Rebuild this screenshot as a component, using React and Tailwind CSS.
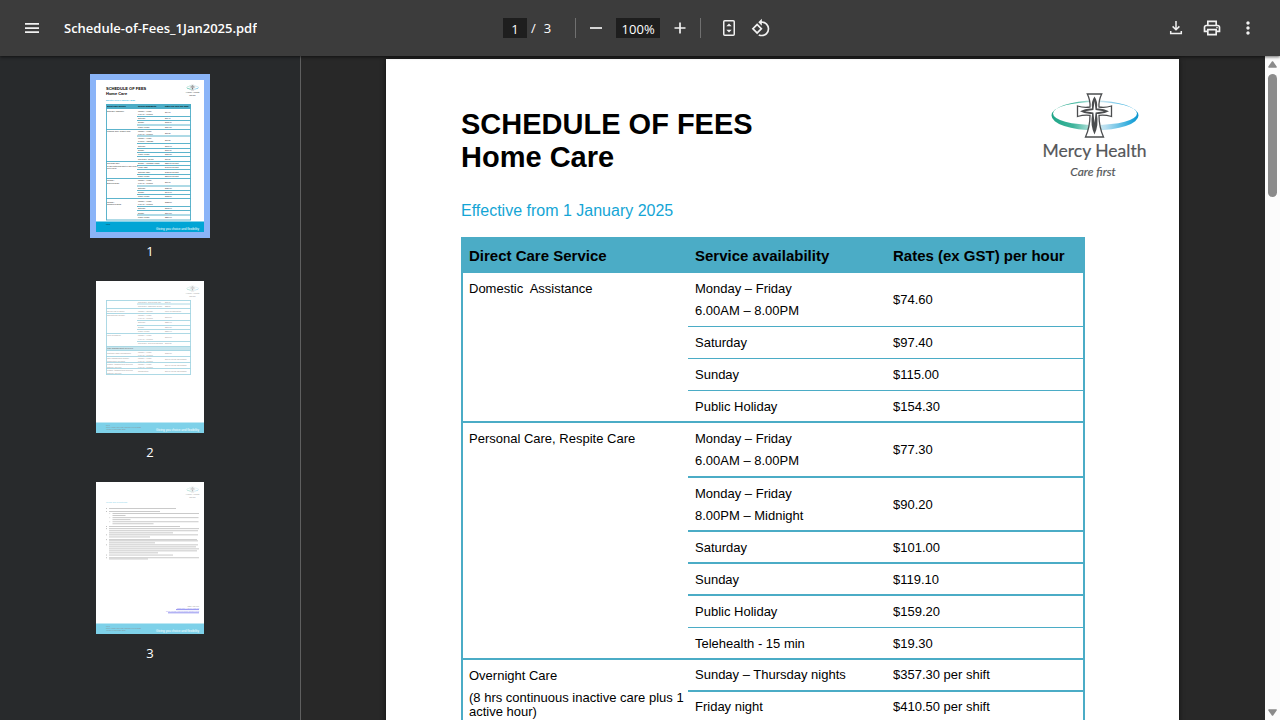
import React from "react";
import {
  MdMoreVert,
  MdOutlinePrint,
  MdOutlineRotate90DegreesCcw,
} from "react-icons/md";

const groups = [
  {
    name: "Domestic\u00a0 Assistance",
    rows: [
      { when: ["Monday – Friday", "6.00AM – 8.00PM"], rate: "$74.60", cls: "h-[54px] border-b" },
      { when: ["Saturday"], rate: "$97.40", cls: "h-8 border-b" },
      { when: ["Sunday"], rate: "$115.00", cls: "h-8 border-b" },
      { when: ["Public Holiday"], rate: "$154.30", cls: "h-8 border-b-2 pt-0.5" },
    ],
  },
  {
    name: "Personal Care, Respite Care",
    rows: [
      { when: ["Monday – Friday", "6.00AM – 8.00PM"], rate: "$77.30", cls: "h-[55px] border-b-2" },
      { when: ["Monday – Friday", "8.00PM – Midnight"], rate: "$90.20", cls: "h-[54px] border-b-2 pt-0.5" },
      { when: ["Saturday"], rate: "$101.00", cls: "h-8 border-b-2 pt-0.5" },
      { when: ["Sunday"], rate: "$119.10", cls: "h-8 border-b-2 pt-0.5" },
      { when: ["Public Holiday"], rate: "$159.20", cls: "h-8 border-b" },
      { when: ["Telehealth - 15 min"], rate: "$19.30", cls: "h-8 border-b-2 pt-0.5" },
    ],
  },
  {
    name: "Overnight Care",
    note: "(8 hrs continuous inactive care plus 1 active hour)",
    rows: [
      { when: ["Sunday – Thursday nights"], rate: "$357.30 per shift", cls: "h-8 border-b-2" },
      { when: ["Friday night"], rate: "$410.50 per shift", cls: "h-8 border-b-2" },
    ],
  },
];

function Logo({ id, ...rest }) {
  return (
    <svg viewBox="0 0 104 86" role="img" aria-label="Mercy Health" {...rest}>
      <defs>
        <linearGradient id={id} x1="0" x2="1">
          <stop offset="0" stopColor="#1fa587" />
          <stop offset="0.25" stopColor="#3fb59c" />
          <stop offset="0.5" stopColor="#d5eeee" />
          <stop offset="0.62" stopColor="#b9dff0" />
          <stop offset="0.88" stopColor="#35aede" />
          <stop offset="1" stopColor="#0a95cf" />
        </linearGradient>
      </defs>
      <path
        fill={`url(#${id})`}
        fillRule="evenodd"
        d="M8.500 22.500a43.500 15 0 1 0 87 0a43.500 15 0 1 0 -87 0ZM10 20.500a42 11.500 0 1 1 84 0a42 11.500 0 1 1 -84 0Z"
      />
      <path
        fill="#fff"
        stroke="#4b4d4f"
        strokeWidth="1.300"
        d="M44.300 1H58.700Q55.600 7 56 14Q62 15 68.500 13V23.500Q62 21.500 56 22.300Q56 34 60.500 44H42.500Q47 34 47 22.300Q41 21.500 34.500 23.500V13Q41 15 47 14Q47.400 7 44.300 1Z"
      />
      <path
        fill="#4b4d4f"
        d="M51.500 3.500Q55.300 9 53.900 15.600Q60 15 66 18.300Q60 21.600 53.900 21Q56 32 51.500 41.500Q47 32 49.100 21Q43 21.600 37 18.300Q43 15 49.100 15.600Q47.700 9 51.500 3.500Z"
      />
      <path
        fill="#fff"
        d="M51.500 8L52.600 17L61 18.300L52.600 19.600L51.500 30L50.400 19.600L42 18.300L50.400 17Z"
      />
      <g fill="#55575a" fontFamily="Lato, sans-serif" textAnchor="middle">
        <text x="51.500" y="64" fontSize="17.500" stroke="#55575a" strokeWidth="0.200">Mercy Health</text>
        <text x="50" y="83" fontSize="12" fontStyle="italic" stroke="#55575a" strokeWidth="0.200">Care first</text>
      </g>
    </svg>
  );
}

/* Thumbnail drawings share a 108 x 152 canvas; table texts are [x, y, text]. */
const C1 = 11;
const C2 = 42;
const C3 = 69;
const MF = "Monday – Friday";
const HRS = "6.00AM – 8.00PM";

const thumbOne = {
  part: [36.5, 40.5, 45, 56, 63.5, 68.5, 72.5, 76.5, 85.5, 89.5, 94.5, 106, 110.5, 114.5, 126.5, 130.5, 135],
  full: [49.5, 81.5, 98.5, 118.5, 140],
  text: [
    [C1, 31.7, "Domestic Assistance"], [C2, 31.7, MF], [C2, 34.8, HRS], [C3, 33, "$74.60"],
    [C2, 39, "Saturday"], [C3, 39, "$97.40"], [C2, 43.3, "Sunday"], [C3, 43.3, "$115.00"],
    [C2, 48, "Public Holiday"], [C3, 48, "$154.30"],
    [C1, 52, "Personal Care, Respite Care"], [C2, 51.9, MF], [C2, 54.8, HRS], [C3, 54, "$77.30"],
    [C2, 59, MF], [C2, 62, "8.00PM – Midnight"], [C3, 61, "$90.20"],
    [C2, 67, "Saturday"], [C3, 67, "$101.00"], [C2, 71.2, "Sunday"], [C3, 71.2, "$119.10"],
    [C2, 75.2, "Public Holiday"], [C3, 75.2, "$159.20"], [C2, 80, "Telehealth - 15 min"], [C3, 80, "$19.30"],
    [C1, 84.2, "Overnight Care"], [C2, 84.2, "Sunday – Thursday nights"], [C3, 84.2, "$357.30 per shift"],
    [C1, 87, "(8 hrs continuous inactive care plus 1"], [C1, 89, "active hour)"],
    [C2, 88, "Friday night"], [C3, 88, "$410.50 per shift"],
    [C2, 93, "Saturday night"], [C3, 93, "$431.20 per shift"], [C2, 97.3, "Public Holiday"], [C3, 97.3, "$560.50 per shift"],
    [C1, 101.3, "Nursing –"], [C1, 104, "Enrolled Nurse"], [C2, 101.3, MF], [C2, 104.3, HRS], [C3, 103, "$99.10"],
    [C2, 109, "Saturday"], [C3, 109, "$126.30"], [C2, 113.2, "Sunday"], [C3, 113.2, "$141.10"],
    [C2, 117.2, "Public Holiday"], [C3, 117.2, "$188.20"],
    [C1, 122.5, "Nursing –"], [C1, 125, "Registered Nurse"], [C2, 122.3, MF], [C2, 125.3, HRS], [C3, 123, "$128.50"],
    [C2, 129.3, "Saturday"], [C3, 129.3, "$168.60"], [C2, 133.5, "Sunday"], [C3, 133.5, "$194.50"],
    [C2, 138.2, "Public Holiday"], [C3, 138.2, "$256.90"],
  ],
};

const thumbTwo = {
  part: [23, 39.5, 44.5, 48.5, 60.5],
  full: [19.5, 27.5, 32.5, 52.5, 65.5, 69.5, 75.5, 81.5, 87.5, 93.5],
  text: [
    [C2, 22, "Telehealth - services 30 min"], [C3, 22, "$65.00"], [C2, 26, "Telehealth - additional 15 min"], [C3, 26, "$32.50"],
    [C1, 31, "On-call visit or advice"], [C2, 31, "Monday – Sunday"], [C3, 31, "Price on application"],
    [C1, 35, "Occupational Therapy"], [C2, 35, MF], [C2, 38, HRS], [C3, 37, "$199.80"],
    [C2, 42.3, "Saturday"], [C3, 42.3, "$236.00"], [C2, 47, "Sunday"], [C3, 47, "$277.20"],
    [C2, 51, "Public Holiday"], [C3, 51, "$359.60"],
    [C1, 55, "Meal preparation"], [C2, 55, MF], [C2, 59, HRS], [C3, 57, "$199.80"],
    [C2, 63.3, "Telehealth - services individual"], [C3, 63.3, "$117.20"],
    [C1, 73.2, "Customer Case Management"], [C2, 72, MF], [C2, 75, HRS], [C3, 73, "$139.20"],
    [C1, 78, "Care Management support"], [C1, 80.5, "(supplement included)"], [C2, 78, MF], [C2, 80.5, HRS], [C3, 79, "$69.60 per 30 min session"],
    [C1, 84, "Garden, transportation services"], [C1, 86.5, "distance travelled"], [C2, 84, MF], [C2, 86.5, HRS], [C3, 85, "$69.60 per 30 min session"],
    [C1, 90, "Garden, transportation services"], [C1, 92.5, "distance travelled"], [C2, 91, "Consultation"], [C3, 91, "$69.60 per 30 min session"],
  ],
};

/* Paragraph lines of the terms page: [x, y, width]. */
const termLines = [
  [13, 26, 67], [13, 29, 51], [16.5, 31, 86.5], [16.5, 33, 13], [16.5, 35.2, 86], [16.5, 37.2, 18],
  [16.5, 39.3, 86], [16.5, 41.3, 41], [13, 44, 71], [13, 46.2, 90], [13, 48.3, 89], [13, 50.4, 64],
  [13, 52.4, 89], [13, 54.5, 41], [13, 57.2, 88], [13, 58.4, 89], [13, 60.4, 46], [13, 62.4, 89],
  [13, 64.4, 87], [13, 66.4, 90], [13, 68.4, 88], [13, 70.4, 49], [13, 72.6, 64], [13, 75.3, 90], [13, 76.5, 39],
];
const termMarks = [26, 29, 44, 46.2, 52.4, 57.2, 62.4, 72.6, 75.3];

function ThumbTable({ data, top }) {
  const bottom = data.full[data.full.length - 1];
  return (
    <g>
      <g fill="#222" fontSize="1.850">
        {data.text.map(([x, y, t], i) => (
          <text key={i} x={x} y={y}>{t}</text>
        ))}
      </g>
      <g stroke="#4bacc6" strokeWidth="0.900" fill="none">
        {data.part.map((y) => <path key={y} d={`M41 ${y}H94.500`} />)}
        {data.full.map((y) => <path key={y} d={`M10 ${y}H95`} />)}
        <path d={`M10.500 ${top}V${bottom}M94.500 ${top}V${bottom}`} />
      </g>
    </g>
  );
}

function ThumbFooter({ lines }) {
  return (
    <g>
      <rect y="141.500" width="108" height="10.500" fill="#00a5d5" />
      <text x="103" y="149.600" textAnchor="end" fontSize="3.100" fill="#fff">
        Giving you choice and flexibility
      </text>
      <g fontSize="1.600" fill="#111">
        {lines.map((t, i) => (
          <text key={t} x="10" y={i * 2 + 144.6}>{t}</text>
        ))}
      </g>
    </g>
  );
}

function ThumbArt({ page }) {
  const footer = ["Mercy Health Home Care Schedule of Fees 2025", "Version 1.0 December 2024"];
  return (
    <svg
      viewBox="0 0 108 152"
      className="block w-full bg-white"
      fontFamily="'Liberation Sans', Arial, sans-serif"
      aria-hidden="true"
    >
      <g opacity={page === 1 ? 1 : 0.5}>
        <Logo id={`thumb-logo-${page}`} x="89.500" y="4.500" width="14.200" height="11.700" />
        {page === 1 && (
          <g>
            <text x="10" y="10.300" fontSize="4" fontWeight="700">SCHEDULE OF FEES</text>
            <text x="10" y="15" fontSize="4" fontWeight="700">Home Care</text>
            <text x="10" y="21.200" fontSize="2.200" fill="#00a5d5">Effective from 1 January 2025</text>
            <rect x="10" y="24" width="85" height="5" fill="#4bacc6" />
            <g fontSize="2.050" fontWeight="700">
              <text x={C1} y="27.300">Direct Care Service</text>
              <text x={C2} y="27.300">Service availability</text>
              <text x={C3} y="27.300">Rates (ex GST) per hour</text>
            </g>
            <ThumbTable data={thumbOne} top={24} />
            <ThumbFooter lines={["1 of 3"]} />
          </g>
        )}
        {page === 2 && (
          <g>
            <rect x="10" y="65.500" width="85" height="4" fill="#92cddc" />
            <text x={C1} y="68.200" fontSize="2" fontWeight="700">Care Management Services</text>
            <ThumbTable data={thumbTwo} top={19.1} />
            <ThumbFooter lines={["2 of 3", ...footer]} />
          </g>
        )}
        {page === 3 && (
          <g>
            <text x="10" y="21" fontSize="2.200" fill="#00a5d5">Terms and Conditions</text>
            <g fill="#777">
              {termLines.map(([x, y, w]) => <rect key={y} x={x} y={y} width={w} height="0.900" opacity="0.850" />)}
              {termMarks.map((y) => <rect key={y} x="10" y={y} width="1" height="0.900" />)}
              {[31, 35.2, 39.3].map((y) => <rect key={y} x="13.500" y={y} width="0.600" height="0.900" />)}
            </g>
            <g fontSize="1.900" textAnchor="end">
              <text x="103" y="124.500" fill="#222">1300 478 776</text>
              <g fill="#1212e0">
                <text x="103" y="127.300">homecare@mercy.com.au</text>
                <text x="103" y="130.400">mercyhealth.com.au/homecareservices</text>
              </g>
            </g>
            <path d="M80 127.600H103M72 130.800H103" stroke="#1212e0" strokeWidth="0.900" />
            <ThumbFooter lines={["3 of 3", ...footer]} />
          </g>
        )}
      </g>
    </svg>
  );
}

function IconButton({ label, children }) {
  return (
    <button type="button" aria-label={label} className="flex size-8 items-center justify-center rounded-full text-[#f1f1f1] hover:bg-white/10">
      {children}
    </button>
  );
}

function Toolbar() {
  return (
    <header className="relative z-10 grid h-14 shrink-0 grid-cols-[1fr_auto_1fr] items-center bg-[#3c3c3c] px-4 text-[13px] text-white shadow-[0_1px_3px_rgba(0,0,0,0.6)]">
      <div className="flex min-w-0 items-center gap-4">
        <IconButton label="Toggle sidebar">
          <svg viewBox="0 0 20 20" className="size-5" fill="currentColor" aria-hidden="true">
            <path d="M3 5h14v1.700H3zM3 9.200h14v1.700H3zM3 13.300h14v1.700H3z" />
          </svg>
        </IconButton>
        <h1 className="truncate pt-0.5 font-semibold">Schedule-of-Fees_1Jan2025.pdf</h1>
      </div>
      <div className="flex items-center">
        <input aria-label="Page number" defaultValue="1" className="h-5 w-6 bg-[#1e1e1e] pt-0.5 text-center outline-none" />
        <span className="ml-1 pt-0.5">/</span>
        <span className="ml-2 pt-0.5">3</span>
        <span className="mr-1 ml-6 h-5 w-px bg-[#707070]" />
        <IconButton label="Zoom out">
          <svg viewBox="0 0 20 20" className="size-5" aria-hidden="true">
            <path d="M4 10h12" stroke="currentColor" strokeWidth="1.700" />
          </svg>
        </IconButton>
        <input aria-label="Zoom level" defaultValue="100%" className="mx-1 h-5 w-11 bg-[#1e1e1e] pt-0.5 text-center outline-none" />
        <IconButton label="Zoom in">
          <svg viewBox="0 0 20 20" className="size-5" aria-hidden="true">
            <path d="M4.500 10h11M10 4.500v11" stroke="currentColor" strokeWidth="1.700" />
          </svg>
        </IconButton>
        <span className="mr-3 ml-1 h-5 w-px bg-[#707070]" />
        <IconButton label="Fit to page">
          <svg viewBox="0 0 20 20" className="size-5" aria-hidden="true">
            <rect x="4.750" y="2.750" width="10.500" height="14.500" rx="1" fill="none" stroke="currentColor" strokeWidth="1.500" />
            <path d="M10 5.500L12.700 8.300H7.300ZM10 14.500L12.700 11.700H7.300Z" fill="currentColor" />
          </svg>
        </IconButton>
        <IconButton label="Rotate counterclockwise">
          <MdOutlineRotate90DegreesCcw className="size-5" />
        </IconButton>
      </div>
      <div className="flex items-center justify-end gap-1">
        <IconButton label="Download">
          <svg viewBox="0 0 20 20" className="size-5" fill="none" stroke="currentColor" strokeWidth="1.500" aria-hidden="true">
            <path d="M10 3v8.500M6.600 8.400L10 11.800L13.400 8.400M4.700 13v2.600h10.600V13" />
          </svg>
        </IconButton>
        <IconButton label="Print">
          <MdOutlinePrint className="size-5" />
        </IconButton>
        <IconButton label="More actions">
          <MdMoreVert className="size-5" />
        </IconButton>
      </div>
    </header>
  );
}

function Sidebar() {
  return (
    <nav aria-label="Page thumbnails" className="w-[301px] shrink-0 overflow-hidden border-r border-[#5f5f5f] bg-[#282a2c] pt-[18px]">
      <ol className="flex flex-col items-center">
        {[1, 2, 3].map((n) => (
          <li key={n}>
            <button type="button" aria-label={`Page ${n}`} className={`block w-[120px] border-[6px] ${n === 1 ? "border-[#8ab4f8]" : "border-transparent"}`}>
              <ThumbArt page={n} />
            </button>
            <p className="mt-[5px] mb-4 text-center text-[13px] leading-4 text-white">{n}</p>
          </li>
        ))}
      </ol>
    </nav>
  );
}

function FeesTable() {
  return (
    <table className="w-full table-fixed border-separate border-spacing-0 border-x-2 border-[#4bacc6] text-left text-[13px] leading-[22px]">
      <colgroup>
        <col className="w-[225px]" />
        <col className="w-[198px]" />
        <col />
      </colgroup>
      <thead className="bg-[#4bacc6] text-[15px]">
        <tr className="h-9">
          <th scope="col" className="p-0 pt-0.5 pl-1.5">Direct Care Service</th>
          <th scope="col" className="p-0 pt-0.5 pl-[7px]">Service availability</th>
          <th scope="col" className="p-0 pt-0.5 pl-[7px]">Rates (ex GST) per hour</th>
        </tr>
      </thead>
      {groups.map((g) => (
        <tbody key={g.name}>
          {g.rows.map((r, i) => (
            <tr key={i}>
              {i === 0 && (
                <th scope="rowgroup" rowSpan={g.rows.length} className="border-b-2 border-[#4bacc6] pt-[5px] pr-0 pb-0 pl-1.5 align-top font-normal">
                  {g.name}
                  {g.note && <p className="mt-1 leading-[14px]">{g.note}</p>}
                </th>
              )}
              <td className={`${r.cls} border-[#4bacc6] pr-0 pb-0 pl-[7px]`}>
                {r.when.map((t) => <p key={t}>{t}</p>)}
              </td>
              <td className={`${r.cls} border-[#4bacc6] pr-0 pb-0 pl-[7px]`}>{r.rate}</td>
            </tr>
          ))}
        </tbody>
      ))}
    </table>
  );
}

function Scrollbar() {
  return (
    <div className="flex w-[15px] shrink-0 flex-col items-center bg-[#fcfcfc] text-[#8b8b8b]" aria-hidden="true">
      <svg viewBox="0 0 15 18" className="h-[18px] w-[15px]">
        <path d="M7.500 6L11 11H4Z" fill="currentColor" stroke="currentColor" strokeWidth="1.600" strokeLinejoin="round" />
      </svg>
      <div className="h-[123px] w-[9px] rounded-full bg-current" />
      <svg viewBox="0 0 15 18" className="mt-auto h-[18px] w-[15px]">
        <path d="M7.500 13L11 8H4Z" fill="currentColor" stroke="currentColor" strokeWidth="1.600" strokeLinejoin="round" />
      </svg>
    </div>
  );
}

export default function App() {
  return (
    <div className="flex h-screen flex-col overflow-hidden bg-[#282828] font-['Open_Sans','Noto_Sans',sans-serif]">
      <Toolbar />
      <div className="flex min-h-0 flex-1">
        <Sidebar />
        <main className="flex min-w-0 flex-1 justify-center overflow-hidden pt-[3px] pr-px">
          <article className="aspect-[210/297] w-[793px] shrink-0 self-start bg-white pl-[75px] font-['Liberation_Sans',Arial,sans-serif] text-black shadow-[0_0_5px_rgba(0,0,0,0.6)]">
            <div className="flex justify-between pr-8">
              <div className="pt-[49px]">
                <h2 className="text-[29px] leading-[33px] font-bold">
                  SCHEDULE OF FEES
                  <br />
                  Home Care
                </h2>
                <p className="mt-[27px] mb-4 text-base leading-5 text-[#14a5d5]">Effective from 1 January 2025</p>
              </div>
              <Logo id="page-logo" className="mt-[34px] h-[86px] w-[104px]" />
            </div>
            <div className="pr-[94px]">
              <FeesTable />
            </div>
          </article>
        </main>
        <Scrollbar />
      </div>
    </div>
  );
}
